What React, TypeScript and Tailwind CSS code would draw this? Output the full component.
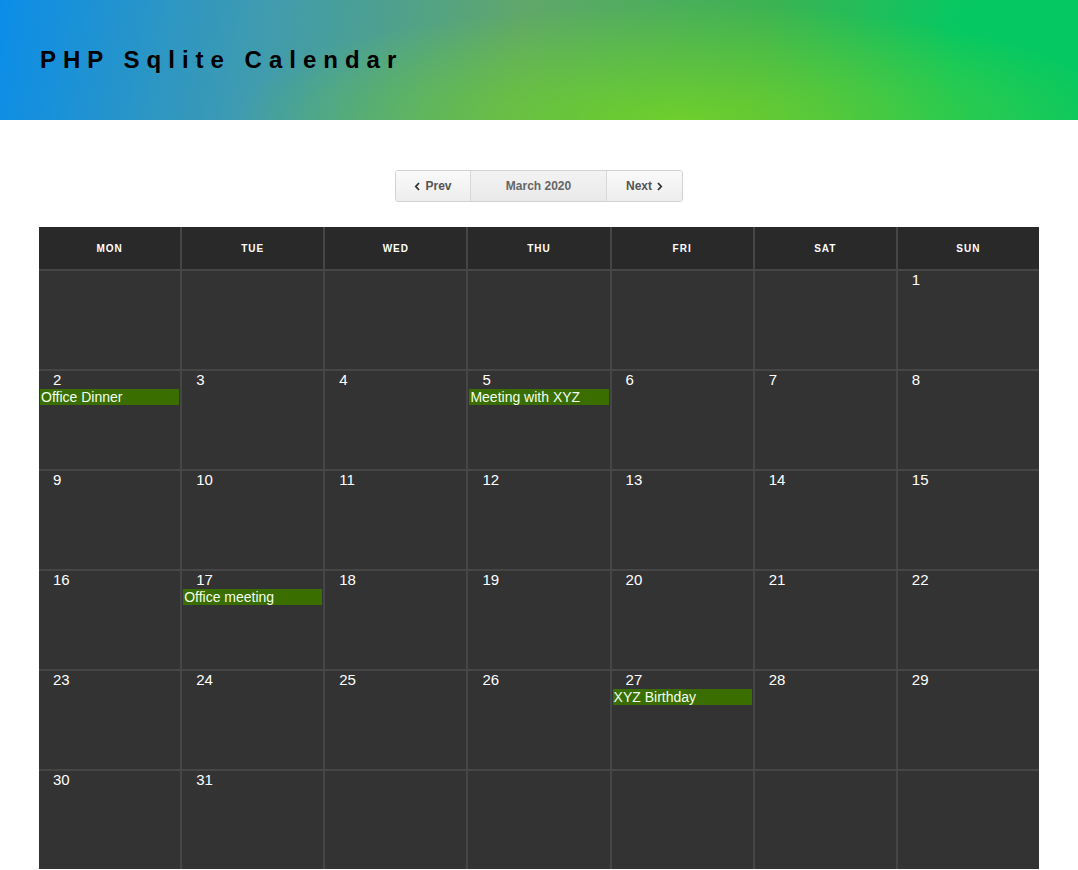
import React from 'react';

type CalEvent = { day: number; title: string };

const events: CalEvent[] = [
  { day: 2, title: 'Office Dinner' },
  { day: 5, title: 'Meeting with XYZ' },
  { day: 17, title: 'Office meeting' },
  { day: 27, title: 'XYZ Birthday' },
];

const dayNames = ['MON', 'TUE', 'WED', 'THU', 'FRI', 'SAT', 'SUN'];

// March 2020 starts on a Sunday -> 6 blank cells before day 1
const buildCells = (): (number | null)[] => {
  const cells: (number | null)[] = [];
  for (let i = 0; i < 6; i++) cells.push(null);
  for (let d = 1; d <= 31; d++) cells.push(d);
  while (cells.length < 42) cells.push(null);
  return cells;
};

const Chevron = ({ dir }: { dir: 'left' | 'right' }) => (
  <svg width="7" height="9" viewBox="0 0 7 9" className="inline-block">
    <path
      d={dir === 'left' ? 'M5 1 L1.8 4.5 L5 8' : 'M2 1 L5.2 4.5 L2 8'}
      fill="none"
      stroke="currentColor"
      strokeWidth="1.8"
    />
  </svg>
);

const App: React.FC = () => {
  const cells = buildCells();

  return (
    <div className="min-h-screen bg-white font-['Liberation_Sans',Arial,sans-serif]">
      {/* Header */}
      <div className="h-[120px] flex items-center px-[40px] bg-[radial-gradient(ellipse_55%_130%_at_63%_100%,rgba(112,208,42,0.95)_0%,rgba(112,208,42,0)_75%),linear-gradient(100deg,#0b8de8_0%,#3f9bb0_24%,#5fa76a_48%,#3db352_70%,#05c862_88%)]">
        <h1 className="text-[24px] font-bold tracking-[7px] text-black leading-none">PHP Sqlite Calendar</h1>
      </div>

      {/* Month navigation */}
      <div className="flex justify-center mt-[50px]">
        <div className="flex h-[32px] border border-[#d2d2d2] rounded-[3px] overflow-hidden text-[12px] font-bold text-[#555]">
          <button className="w-[74px] flex items-center justify-center gap-[4px] bg-[linear-gradient(#fafafa,#ededed)]">
            <span className="text-[#333]"><Chevron dir="left" /></span>
            Prev
          </button>
          <div className="w-[137px] flex items-center justify-center border-x border-[#d8d8d8] bg-[linear-gradient(#f3f3f3,#e9e9e9)] text-[#666]">
            March 2020
          </div>
          <button className="w-[75px] flex items-center justify-center gap-[4px] bg-[linear-gradient(#fafafa,#ededed)]">
            Next
            <span className="text-[#333]"><Chevron dir="right" /></span>
          </button>
        </div>
      </div>

      {/* Calendar */}
      <div className="w-[1000px] mx-auto mt-[25px] grid grid-cols-7 gap-[2px] bg-[#464646]">
        {dayNames.map((d) => (
          <div key={d} className="h-[42px] bg-[#292929] flex items-center justify-center text-white text-[10px] font-bold tracking-[1px]">
            {d}
          </div>
        ))}
        {cells.map((day, i) => {
          const ev = day ? events.find((e) => e.day === day) : undefined;
          return (
            <div key={i} className="h-[98px] bg-[#333333] pt-[1px]">
              {day && (
                <div className="pl-[14px] text-white text-[15px] leading-[16px]">{day}</div>
              )}
              {ev && (
                <div className="mt-[1px] ml-[1px] mr-[1px] h-[16px] bg-[#3a6e00] text-[#f2fff0] text-[14px] leading-[16px] pl-[1px] whitespace-nowrap overflow-hidden">
                  {ev.title}
                </div>
              )}
            </div>
          );
        })}
      </div>
    </div>
  );
};

export default App;
